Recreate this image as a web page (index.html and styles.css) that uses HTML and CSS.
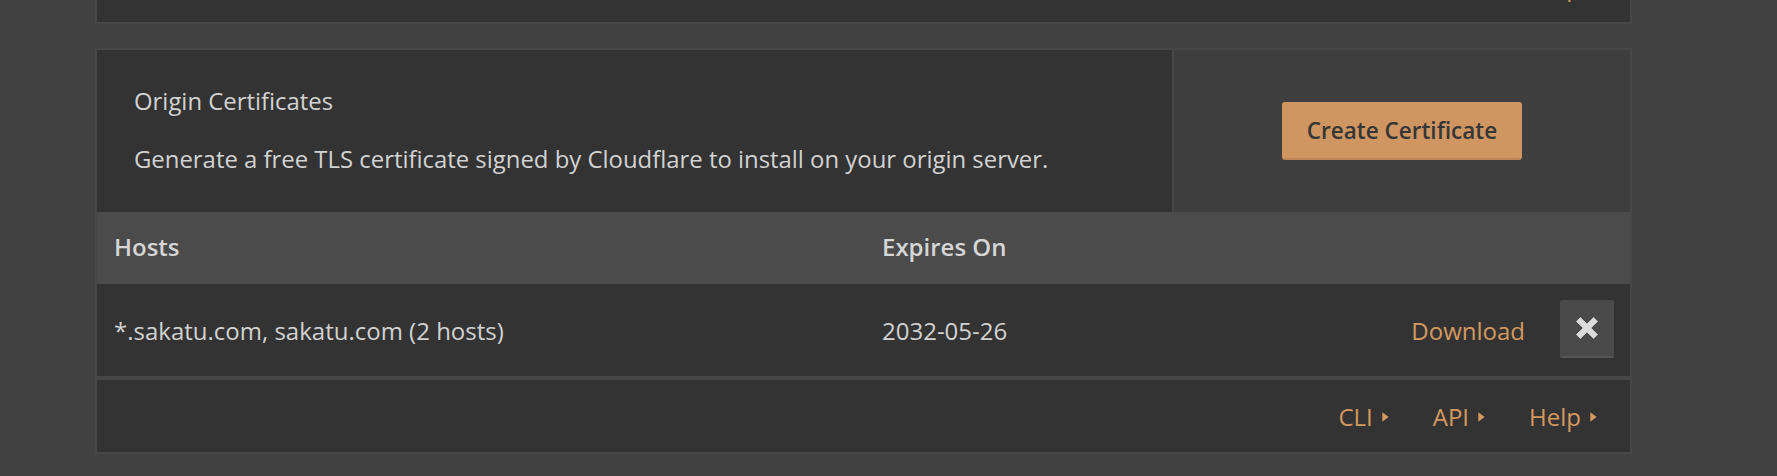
FILE: index.html
```html
<!DOCTYPE html>
<html lang="en">
<head>
<meta charset="utf-8">
<title>Origin Certificates</title>
<link rel="stylesheet" href="styles.css">
</head>
<body>
<div class="page">
  <section class="card card-prev">
    <div class="card-footer">
      <a class="doc-link">CLI<svg class="caret" viewBox="0 0 7 10"><polygon points="0.3,0.3 6.7,5 0.3,9.7"/></svg></a>
      <a class="doc-link">API<svg class="caret" viewBox="0 0 7 10"><polygon points="0.3,0.3 6.7,5 0.3,9.7"/></svg></a>
      <a class="doc-link">Help<svg class="caret" viewBox="0 0 7 10"><polygon points="0.3,0.3 6.7,5 0.3,9.7"/></svg></a>
    </div>
  </section>

  <section class="card">
    <div class="card-top">
      <div class="card-info">
        <p class="card-title">Origin Certificates</p>
        <p class="card-desc">Generate a free TLS certificate signed by Cloudflare to install on your origin server.</p>
      </div>
      <div class="card-control">
        <button class="btn-primary">Create Certificate</button>
      </div>
    </div>

    <div class="table">
      <div class="row row-head">
        <div class="cell">Hosts</div>
        <div class="cell">Expires On</div>
        <div class="cell"></div>
      </div>
      <div class="row row-body">
        <div class="cell">*.sakatu.com, sakatu.com (2 hosts)</div>
        <div class="cell">2032-05-26</div>
        <div class="cell cell-actions">
          <a class="action-link">Download</a>
          <button class="btn-icon" aria-label="Revoke">
            <svg viewBox="0 0 100 100"><path d="M20 2 L50 32 L80 2 L98 20 L68 50 L98 80 L80 98 L50 68 L20 98 L2 80 L32 50 L2 20 Z"/></svg>
          </button>
        </div>
      </div>
    </div>

    <div class="card-footer">
      <a class="doc-link">CLI<svg class="caret" viewBox="0 0 7 10"><polygon points="0.3,0.3 6.7,5 0.3,9.7"/></svg></a>
      <a class="doc-link">API<svg class="caret" viewBox="0 0 7 10"><polygon points="0.3,0.3 6.7,5 0.3,9.7"/></svg></a>
      <a class="doc-link">Help<svg class="caret" viewBox="0 0 7 10"><polygon points="0.3,0.3 6.7,5 0.3,9.7"/></svg></a>
    </div>
  </section>
</div>
</body>
</html>
```

FILE: styles.css
```css
* { box-sizing: border-box; }

html, body {
  margin: 0;
  padding: 0;
  background: #414141;
  font-family: "Open Sans", "Noto Sans", sans-serif;
  color: #d2d2d2;
  font-size: 24px;
}

.page {
  margin-top: -50px;
  margin-left: 95px;
  width: 1537px;
  display: flex;
  flex-direction: column;
  gap: 24px;
}

.card {
  background: #333333;
  border: 2px solid #474747;
}

.card-prev {
  border-top: none;
}

.card-top {
  display: flex;
  height: 162px;
}

.card-info {
  flex: 1;
  display: flex;
  flex-direction: column;
  justify-content: center;
  gap: 22px;
  padding-left: 37px;
  padding-bottom: 2px;
  font-size: 23.9px;
}

.card-info p {
  margin: 0;
  line-height: 36px;
}

.card-control {
  width: 458px;
  border-left: 2px solid #474747;
  background: #3e3e3e;
  display: flex;
  align-items: center;
  justify-content: center;
}

.btn-primary {
  width: 240px;
  height: 58px;
  border: none;
  border-bottom: 2px solid #bf8756;
  border-radius: 3px;
  background: #d09662;
  color: #363636;
  font-family: "Open Sans", "Noto Sans", sans-serif;
  font-size: 22.5px;
  font-weight: 600;
  padding: 0;
}

.row {
  display: grid;
  grid-template-columns: 768px 1fr auto;
  align-items: center;
}

.cell {
  padding-left: 17px;
}

.row-head {
  height: 72px;
  background: #4b4b4b;
  font-weight: 600;
  color: #d6d6d6;
  padding-bottom: 3px;
}

.row-body {
  height: 96px;
  border-bottom: 4px solid #474747;
  padding-right: 16px;
}

.cell-actions {
  display: flex;
  align-items: center;
  gap: 35px;
}

.action-link {
  color: #d4995f;
}

.btn-icon {
  width: 54px;
  height: 58px;
  border: none;
  border-bottom: 2px solid #555555;
  border-radius: 2px;
  background: #4a4a4a;
  padding: 0;
  display: flex;
  align-items: center;
  justify-content: center;
  margin-top: -2px;
}

.btn-icon svg {
  width: 22px;
  height: 22px;
  fill: #dcdcdc;
  stroke: #dcdcdc;
  stroke-width: 3;
  stroke-linejoin: round;
}

.card-footer {
  height: 72px;
  display: flex;
  align-items: center;
  justify-content: flex-end;
  gap: 44px;
  padding-right: 33px;
}

.doc-link {
  color: #d4995f;
  display: flex;
  align-items: center;
  gap: 9px;
}

.caret {
  width: 7px;
  height: 10px;
  fill: #d4995f;
  margin-top: 2px;
}
```
